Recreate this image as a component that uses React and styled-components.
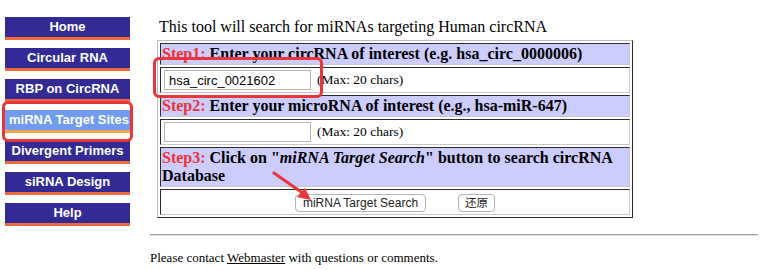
import React from 'react'
import styled, { createGlobalStyle } from 'styled-components'

const GlobalStyle = createGlobalStyle`
  body {
    margin: 0;
    background: #ffffff;
    font-family: "Liberation Serif", "Times New Roman", serif;
  }
`

const Page = styled.div`
  position: relative;
  width: 772px;
  height: 270px;
  overflow: hidden;
`
const Top = styled.div`
  display: flex;
  flex-direction: row;
  align-items: flex-start;
`
const Nav = styled.nav`
  display: flex;
  flex-direction: column;
  gap: 8px;
  width: 125px;
  padding: 17px 0 0 5px;
`
const NavItem = styled.a`
  display: block;
  height: 20px;
  line-height: 20px;
  padding: 0 4px;
  overflow: hidden;
  white-space: nowrap;
  text-align: center;
  color: #ffffff;
  font-family: "Liberation Sans", Arial, sans-serif;
  font-size: 13px;
  font-weight: 700;
  text-decoration: none;
  background-color: ${(props) => (props.active ? '#6f9cf0' : '#332a96')};
  border-bottom: 3px solid ${(props) => (props.active ? '#f2a24a' : '#ec6a3c')};
`
const Main = styled.main`
  display: flex;
  flex-direction: column;
  margin-left: 27px;
  padding-top: 17px;
`
const Title = styled.div`
  font-size: 16px;
  line-height: 19px;
  padding-left: 2px;
  margin-bottom: 4px;
  color: #000;
`
const Form = styled.div`
  display: flex;
  flex-direction: column;
  gap: 2px;
  width: 476px;
  box-sizing: border-box;
  padding: 2px;
  border: 1px solid;
  border-color: #bcbcbc #2c2c2c #2c2c2c #bcbcbc;
`
const Cell = styled.div`
  box-sizing: border-box;
  height: ${(props) => props.h}px;
  border: 1px solid;
  border-color: #2c2c2c #c8c8c8 #c8c8c8 #2c2c2c;
  background: ${(props) => (props.head ? '#ccccfd' : '#ffffff')};
  padding: 0 1px;
  display: flex;
  align-items: ${(props) => (props.head ? 'flex-start' : 'center')};
  justify-content: ${(props) => (props.center ? 'center' : 'flex-start')};
  gap: ${(props) => (props.center ? '32px' : '6px')};
`
const HeadText = styled.div`
  font-size: 16px;
  line-height: 18px;
  padding-top: 1px;
  font-weight: 700;
  color: #000;
`
const Step = styled.span`
  color: #ee3333;
`
const TextInput = styled.input.attrs({ type: 'text' })`
  box-sizing: border-box;
  width: 147px;
  height: 20px;
  margin-left: 2px;
  padding: 0 4px;
  border: 1px solid #b8b8b8;
  font-family: "Liberation Sans", Arial, sans-serif;
  font-size: 13px;
  color: #000;
  outline: none;
`
const Hint = styled.span`
  font-size: 13.5px;
  color: #000;
`
const Button = styled.button`
  box-sizing: border-box;
  height: 18px;
  padding: 0 ${(props) => (props.small ? '6px' : '7px')};
  background: #ffffff;
  border: 1px solid #b4b4b4;
  border-radius: 4px;
  font-family: "Liberation Sans", Arial, "Noto Sans CJK SC", sans-serif;
  font-size: ${(props) => (props.small ? '11.5px' : '12px')};
  line-height: 16px;
  color: #222;
  margin-top: 2px;
`
const Footer = styled.footer`
  padding: 8px 14px 0 150px;
`
const Rule = styled.hr`
  margin: 0;
  border: none;
  border-top: 1px solid #a0a0a0;
  border-bottom: 1px solid #e0e0e0;
`
const FooterText = styled.p`
  margin: 14px 0 0;
  font-size: 13px;
  line-height: 16px;
  color: #000;
`
const Link = styled.a`
  color: #000;
  text-decoration: underline;
`
const Mark = styled.div`
  position: absolute;
  left: ${(props) => props.x}px;
  top: ${(props) => props.y}px;
  width: ${(props) => props.w}px;
  height: ${(props) => props.h}px;
  box-sizing: border-box;
  border: 3px solid #e8363b;
  border-radius: 6px;
  pointer-events: none;
`
const Arrow = styled.svg`
  position: absolute;
  left: 268px;
  top: 168px;
  pointer-events: none;
`

const navItems = [
  'Home',
  'Circular RNA',
  'RBP on CircRNA',
  'miRNA Target Sites',
  'Divergent Primers',
  'siRNA Design',
  'Help',
]

export default function App() {
  return (
    <Page>
      <GlobalStyle />
      <Top>
        <Nav>
          {navItems.map((item) => (
            <NavItem key={item} active={item === 'miRNA Target Sites'}>
              {item}
            </NavItem>
          ))}
        </Nav>
        <Main>
          <Title>This tool will search for miRNAs targeting Human circRNA</Title>
          <Form>
            <Cell head h={22}>
              <HeadText>
                <Step>Step1:</Step> Enter your circRNA of interest (e.g. hsa_circ_0000006)
              </HeadText>
            </Cell>
            <Cell h={26}>
              <TextInput defaultValue="hsa_circ_0021602" />
              <Hint>(Max: 20 chars)</Hint>
            </Cell>
            <Cell head h={22}>
              <HeadText>
                <Step>Step2:</Step> Enter your microRNA of interest (e.g., hsa-miR-647)
              </HeadText>
            </Cell>
            <Cell h={26}>
              <TextInput defaultValue="" />
              <Hint>(Max: 20 chars)</Hint>
            </Cell>
            <Cell head h={40}>
              <HeadText>
                <Step>Step3:</Step> Click on "<i>miRNA Target Search</i>" button to search circRNA Database
              </HeadText>
            </Cell>
            <Cell center h={26}>
              <Button>miRNA Target Search</Button>
              <Button small>还原</Button>
            </Cell>
          </Form>
        </Main>
      </Top>
      <Footer>
        <Rule />
        <FooterText>
          Please contact <Link>Webmaster</Link> with questions or comments.
        </FooterText>
      </Footer>
      <Mark x={2} y={101} w={131} h={41} />
      <Mark x={153} y={57} w={170} h={41} />
      <Arrow width="48" height="36" viewBox="0 0 48 36">
        <line x1="6" y1="5" x2="36" y2="26" stroke="#e8363b" strokeWidth="3" strokeLinecap="round" />
        <polygon points="43,32 29,29 37,20" fill="#e8363b" />
      </Arrow>
    </Page>
  )
}
